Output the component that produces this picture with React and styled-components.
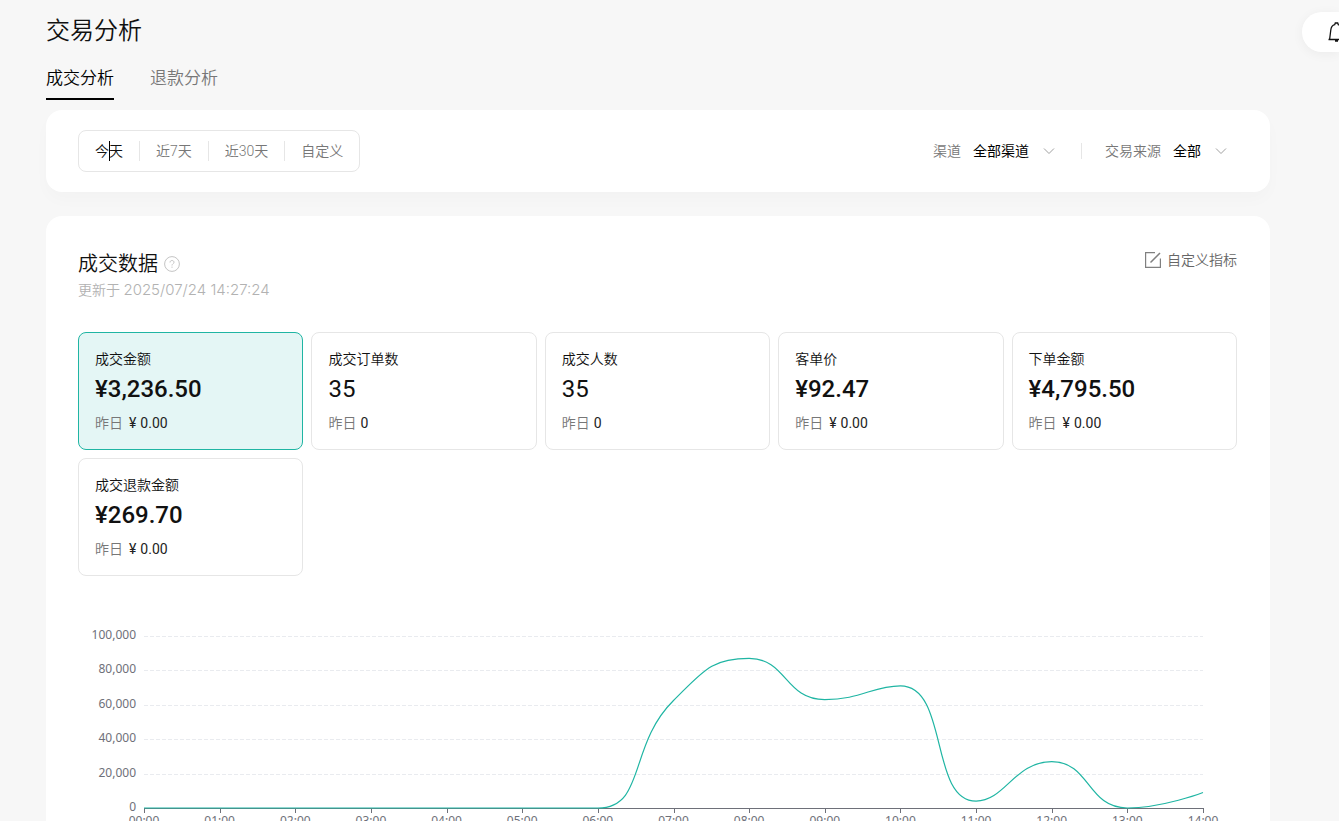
import React, { useLayoutEffect, useRef, useState } from "react";
import styled, { createGlobalStyle, css } from "styled-components";

const TEAL = "#1fb5a3";
const CJK = '"Noto Sans CJK SC"';

const GlobalStyle = createGlobalStyle`
  *, *::before, *::after { box-sizing: border-box; }
  html, body { margin: 0; background: #f7f7f7; }
  body {
    font-family: Roboto, ${CJK}, sans-serif;
    font-size: 14px;
    font-weight: 350;
    line-height: 20px;
    color: #111;
    overflow: hidden;
  }
  button, select { font: inherit; color: inherit; background: none; border: 0; padding: 0; margin: 0; cursor: pointer; }
`;

const Page = styled.div`
  height: 100vh;
  overflow: hidden auto;
  scrollbar-width: none;
`;

const Content = styled.main`
  display: flex;
  flex-direction: column;
  padding: 13px 69px 24px 46px;
`;

const Title = styled.h1`
  margin: 0 0 17px;
  font-size: 24px;
  line-height: 36px;
  font-weight: 350;
`;

const Tabs = styled.nav`
  display: flex;
  gap: 36px;
  margin-bottom: 10px;
`;

const Tab = styled.a`
  padding-bottom: 8px;
  font-size: 17px;
  line-height: 24px;
  text-decoration: none;
  color: ${(p) => (p.$active ? "#000" : "#777")};
  border-bottom: 2px solid ${(p) => (p.$active ? "#000" : "transparent")};
`;

const NoticeButton = styled.button`
  && {
    position: fixed;
    top: 12px;
    right: 0;
    width: 37px;
    height: 40px;
    padding-left: 25px;
    overflow: hidden;
    background: #fff;
    border-radius: 20px 0 0 20px;
    box-shadow: 0 2px 12px rgba(0, 0, 0, 0.05);
  }
  svg { display: block; }
`;

const Card = styled.section`
  background: #fff;
  border-radius: 16px;
`;

const FilterCard = styled(Card)`
  display: flex;
  align-items: center;
  justify-content: space-between;
  padding: 20px 33px 20px 32px;
  margin-bottom: 24px;
  box-shadow: 0 8px 16px rgba(0, 0, 0, 0.02);
`;

const Segments = styled.div`
  display: flex;
  align-items: center;
  height: 42px;
  border: 1px solid #e6e6e6;
  border-radius: 8px;
`;

const Segment = styled.button`
  && {
    position: relative;
    padding: 0 16px;
    color: ${(p) => (p.$active ? "#111" : "#777")};
  }
  & + & { border-left: 1px solid #e6e6e6; }
  ${(p) =>
    p.$caret &&
    css`
      &::after {
        content: "";
        position: absolute;
        left: 50%;
        top: 0;
        width: 1px;
        height: 20px;
        background: #000;
      }
    `}
`;

const Filters = styled.div`
  display: flex;
  align-items: center;
`;

const Filter = styled.label`
  display: flex;
  align-items: center;
  gap: 12px;
  padding-right: 10px;
  color: #777;
  & + & {
    margin-left: 16px;
    padding-left: 24px;
    position: relative;
  }
  & + &::before {
    content: "";
    position: absolute;
    left: 0;
    top: 2px;
    height: 16px;
    width: 1px;
    background: #e6e6e6;
  }
`;

const SelectBox = styled.span`
  display: grid;
  align-items: center;
  & > * { grid-area: 1 / 1; }
  svg { justify-self: end; pointer-events: none; }
`;

const Select = styled.select`
  && {
    appearance: none;
    field-sizing: content;
    padding-right: 26px;
    height: 20px;
    font-weight: 400;
    color: #000;
  }
`;

const DataCard = styled(Card)`
  padding: 32px 33px 32px 32px;
`;

const DataHead = styled.header`
  display: flex;
  justify-content: space-between;
  align-items: flex-start;
  margin-bottom: 32px;
`;

const DataTitle = styled.h2`
  display: flex;
  align-items: center;
  gap: 6px;
  margin: 0;
  padding-top: 2px;
  font-size: 20px;
  line-height: 28px;
  font-weight: 350;
`;

const Updated = styled.p`
  margin: 2px 0 0;
  color: #b2b2b2;
  time { font-family: Inter, sans-serif; font-size: 15px; font-weight: 300; }
`;

const CustomButton = styled.button`
  && {
    display: flex;
    align-items: center;
    gap: 6px;
    height: 24px;
    color: #666;
  }
`;

const Metrics = styled.div`
  display: grid;
  grid-template-columns: repeat(5, minmax(0, 1fr));
  gap: 8px;
  margin-bottom: 40px;
`;

const Metric = styled.button`
  && {
    display: flex;
    flex-direction: column;
    align-items: flex-start;
    padding: 16px;
    border: 1px solid ${(p) => (p.$active ? TEAL : "#e6e6e6")};
    border-radius: 8px;
    background: ${(p) => (p.$active ? "#e4f6f5" : "#fff")};
  }
`;

const MetricValue = styled.strong`
  margin: 4px 0 8px;
  font-size: 24px;
  line-height: 32px;
  font-weight: ${(p) => (p.$money ? 500 : 400)};
`;

const MetricPrev = styled.span`
  display: flex;
  gap: ${(p) => (p.$money ? 6 : 4)}px;
  color: #777;
  span { color: #222; font-weight: 400; }
  i { font-style: normal; margin-right: 4px; }
`;

const ChartBox = styled.div`
  svg { display: block; }
  text {
    font-family: "Noto Sans", sans-serif;
    font-size: 12px;
    font-weight: 400;
    fill: #6e7079;
  }
`;

const metrics = [
  { label: "成交金额", value: "3,236.50", prev: "0.00", money: true },
  { label: "成交订单数", value: "35", prev: "0" },
  { label: "成交人数", value: "35", prev: "0" },
  { label: "客单价", value: "92.47", prev: "0.00", money: true },
  { label: "下单金额", value: "4,795.50", prev: "0.00", money: true },
  { label: "成交退款金额", value: "269.70", prev: "0.00", money: true },
];

const hourly = [0, 0, 0, 0, 0, 0, 0, 62500, 87000, 63000, 71000, 4000, 27000, 0, 9000];
const levels = [100000, 80000, 60000, 40000, 20000, 0];

const clampBetween = (v, a, b) => Math.max(Math.min(v, Math.max(a, b)), Math.min(a, b));

// Smooth curve whose control points never leave the span of the neighbouring values.
function smoothPath(points) {
  let d = `M${points[0][0]} ${points[0][1]}`;
  let [cx0, cy0] = points[0];
  for (let i = 1; i < points.length; i++) {
    const [px, py] = points[i - 1];
    const [x, y] = points[i];
    let cx1 = x;
    let cy1 = y;
    let nx0 = x;
    let ny0 = y;
    if (i < points.length - 1) {
      const [nx, ny] = points[i + 1];
      const before = Math.hypot(x - px, y - py);
      const after = Math.hypot(nx - x, ny - y);
      const ratio = after / (after + before);
      nx0 = clampBetween(x + (nx - px) * 0.5 * ratio, x, nx);
      ny0 = clampBetween(y + (ny - py) * 0.5 * ratio, y, ny);
      cx1 = clampBetween(x - ((nx0 - x) * before) / after, px, x);
      cy1 = clampBetween(y - ((ny0 - y) * before) / after, py, y);
      nx0 = x + ((x - cx1) * after) / before;
      ny0 = y + ((y - cy1) * after) / before;
    }
    d += `C${cx0} ${cy0} ${cx1} ${cy1} ${x} ${y}`;
    cx0 = nx0;
    cy0 = ny0;
  }
  return d;
}

function TrendChart() {
  const box = useRef(null);
  const [width, setWidth] = useState(1159);
  useLayoutEffect(() => {
    const measure = () => setWidth(box.current.clientWidth);
    measure();
    const observer = new ResizeObserver(measure);
    observer.observe(box.current);
    return () => observer.disconnect();
  }, []);

  const left = 66;
  const right = width - 34;
  const top = 20;
  const bottom = 192;
  const xAt = (i) => left + ((right - left) * i) / (hourly.length - 1);
  const yAt = (v) => bottom - ((bottom - top) * v) / 100000;
  const crisp = (v) => Math.round(v) + 0.5;

  return (
    <ChartBox ref={box}>
      <svg width={width} height={230} role="img" aria-label="成交金额">
        {levels.map((v) => (
          <g key={v}>
            {v > 0 && (
              <line x1={left} x2={right} y1={crisp(yAt(v))} y2={crisp(yAt(v))} stroke="#e9ebef" strokeDasharray="4 2" />
            )}
            <text x={left - 8} y={yAt(v) + 3} textAnchor="end">
              {v.toLocaleString("en-US")}
            </text>
          </g>
        ))}
        <line x1={left} x2={right + 1} y1={bottom + 0.5} y2={bottom + 0.5} stroke="#6e7079" />
        {hourly.map((_, i) => (
          <g key={i}>
            <line x1={crisp(xAt(i))} x2={crisp(xAt(i))} y1={bottom} y2={bottom + 5} stroke="#6e7079" />
            <text x={xAt(i)} y={bottom + 17} textAnchor="middle">
              {String(i).padStart(2, "0")}:00
            </text>
          </g>
        ))}
        <path d={smoothPath(hourly.map((v, i) => [xAt(i), yAt(v)]))} fill="none" stroke={TEAL} strokeWidth="1.2" />
      </svg>
    </ChartBox>
  );
}

const Chevron = () => (
  <svg width="12" height="8" viewBox="0 0 12 8" fill="none" stroke="#a0a0a0" aria-hidden="true">
    <path d="M1 1.5l5 5 5-5" />
  </svg>
);

const Bell = () => (
  <svg width="20" height="22" viewBox="0 0 20 22" fill="none" stroke="#111" strokeWidth="1.3" aria-hidden="true">
    <path d="M1.500 18.500h16M2.600 18.500L3.800 9C4.100 6.200 5.500 4.300 7.700 3.700L8.300 2h2.400l.6 1.700c2.200.6 3.600 2.500 3.900 5.300l1.200 9.500M8 20h3" />
  </svg>
);

const Help = () => (
  <svg width="16" height="16" viewBox="0 0 16 16" fill="none" stroke="#c4c4c4" aria-hidden="true">
    <circle cx="8" cy="8" r="7.400" />
    <path d="M6 6.500c0-1.200.8-2 2-2s2 .8 2 1.800c0 1.400-2 1.500-2 3.200M8 10.600v1.200" />
  </svg>
);

const Edit = () => (
  <svg width="16" height="16" viewBox="0 0 16 16" fill="none" stroke="#808080" strokeWidth="1.2" aria-hidden="true">
    <path d="M10 .6H.6v14.800h14.800V6.500" />
    <path d="M5.500 10.500L15 1" strokeWidth="1.500" />
  </svg>
);

export default function App() {
  const [range, setRange] = useState("今天");
  const [selected, setSelected] = useState("成交金额");
  return (
    <Page>
      <GlobalStyle />
      <NoticeButton type="button" aria-label="通知">
        <Bell />
      </NoticeButton>
      <Content>
        <Title>交易分析</Title>
        <Tabs>
          <Tab href="#deal" $active>成交分析</Tab>
          <Tab href="#refund">退款分析</Tab>
        </Tabs>
        <FilterCard>
          <Segments>
            {["今天", "近7天", "近30天", "自定义"].map((name) => (
              <Segment key={name} type="button" $active={range === name} $caret={name === "今天"} onClick={() => setRange(name)}>
                {name}
              </Segment>
            ))}
          </Segments>
          <Filters>
            <Filter>
              渠道
              <SelectBox>
                <Select><option>全部渠道</option></Select>
                <Chevron />
              </SelectBox>
            </Filter>
            <Filter>
              交易来源
              <SelectBox>
                <Select><option>全部</option></Select>
                <Chevron />
              </SelectBox>
            </Filter>
          </Filters>
        </FilterCard>
        <DataCard>
          <DataHead>
            <div>
              <DataTitle>成交数据 <Help /></DataTitle>
              <Updated>更新于 <time>2025/07/24 14:27:24</time></Updated>
            </div>
            <CustomButton type="button"><Edit />自定义指标</CustomButton>
          </DataHead>
          <Metrics>
            {metrics.map(({ label, value, prev, money }) => (
              <Metric key={label} type="button" $active={selected === label} onClick={() => setSelected(label)}>
                <span>{label}</span>
                <MetricValue $money={money}>{money && "¥"}{value}</MetricValue>
                <MetricPrev $money={money}>
                  昨日
                  <span>{money && <i>¥</i>}{prev}</span>
                </MetricPrev>
              </Metric>
            ))}
          </Metrics>
          <TrendChart />
        </DataCard>
      </Content>
    </Page>
  );
}
